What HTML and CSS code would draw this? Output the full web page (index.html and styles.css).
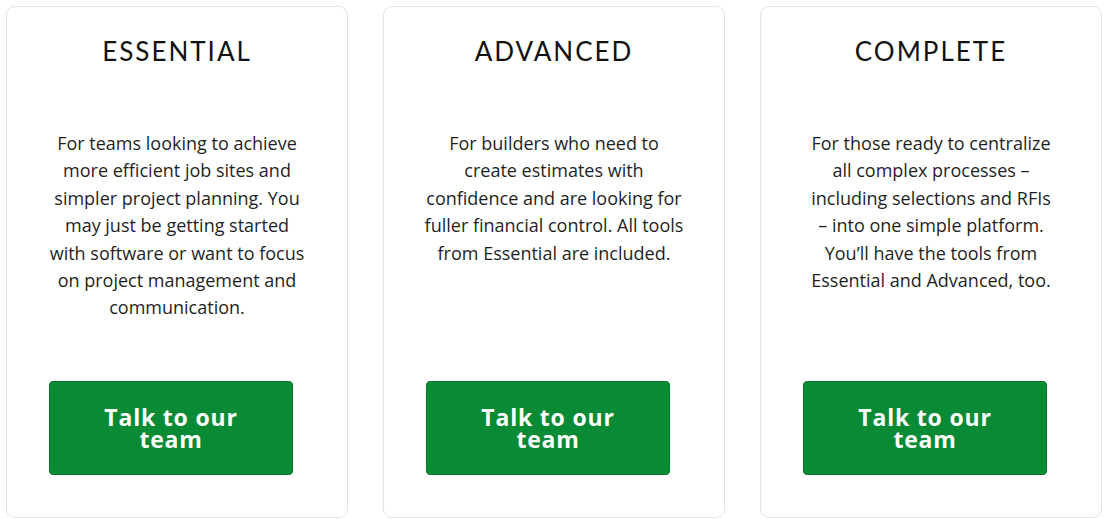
FILE: index.html
```html
<!DOCTYPE html>
<html lang="en">
<head>
  <meta charset="UTF-8" />
  <title>Plans</title>
  <link rel="stylesheet" href="styles.css">
</head>
<body>

<div class="plans">
  <div class="plan">
    <h2>ESSENTIAL</h2>
    <p class="summary">For teams looking to achieve more efficient job sites and simpler project planning. You may just be getting started with software or want to focus on project management and communication.</p>
    <a class="cta" href="#">Talk to our team</a>
  </div>

  <div class="plan">
    <h2>ADVANCED</h2>
    <p class="summary">For builders who need to create estimates with confidence and are looking for fuller financial control. All tools from Essential are included.</p>
    <a class="cta" href="#">Talk to our team</a>
  </div>

  <div class="plan">
    <h2>COMPLETE</h2>
    <p class="summary">For those ready to centralize all complex processes – including selections and RFIs <span class="nowrap">– into</span> one simple platform. You’ll have the tools from Essential and Advanced, too.</p>
    <a class="cta" href="#">Talk to our team</a>
  </div>
</div>

</body>
</html>
```

FILE: styles.css
```css
body {
  font-family: 'Open Sans', sans-serif;
  background-color: #ffffff;
  color: #1f1f1f;
  margin: 0;
  padding: 6px;
}

.plans {
  display: flex;
  gap: 35px;
}

.plan {
  width: 342px;
  height: 512px;
  box-sizing: border-box;
  padding: 0 40px 42px;
  border: 1px solid #e3e3e3;
  border-radius: 9px;
  display: flex;
  flex-direction: column;
  text-align: center;
}

.plan h2 {
  margin: 29px 0 0 0;
  font-family: 'Lato', sans-serif;
  font-size: 26px;
  font-weight: 400;
  letter-spacing: 2px;
  line-height: 30px;
  color: #111;
}

.summary {
  margin: 64px 0 0 0;
  font-size: 18px;
  line-height: 27.4px;
}

.nowrap {
  white-space: nowrap;
}

.cta {
  margin: auto 0 0 2px;
  width: 244px;
  height: 94px;
  box-sizing: border-box;
  padding: 0 50px;
  background-color: #088b34;
  border: 1px solid #06762b;
  border-radius: 4px;
  color: white;
  text-decoration: none;
  font-size: 23px;
  font-weight: 700;
  letter-spacing: 0.8px;
  line-height: 22px;
  display: flex;
  align-items: center;
  justify-content: center;
  text-align: center;
}
```
